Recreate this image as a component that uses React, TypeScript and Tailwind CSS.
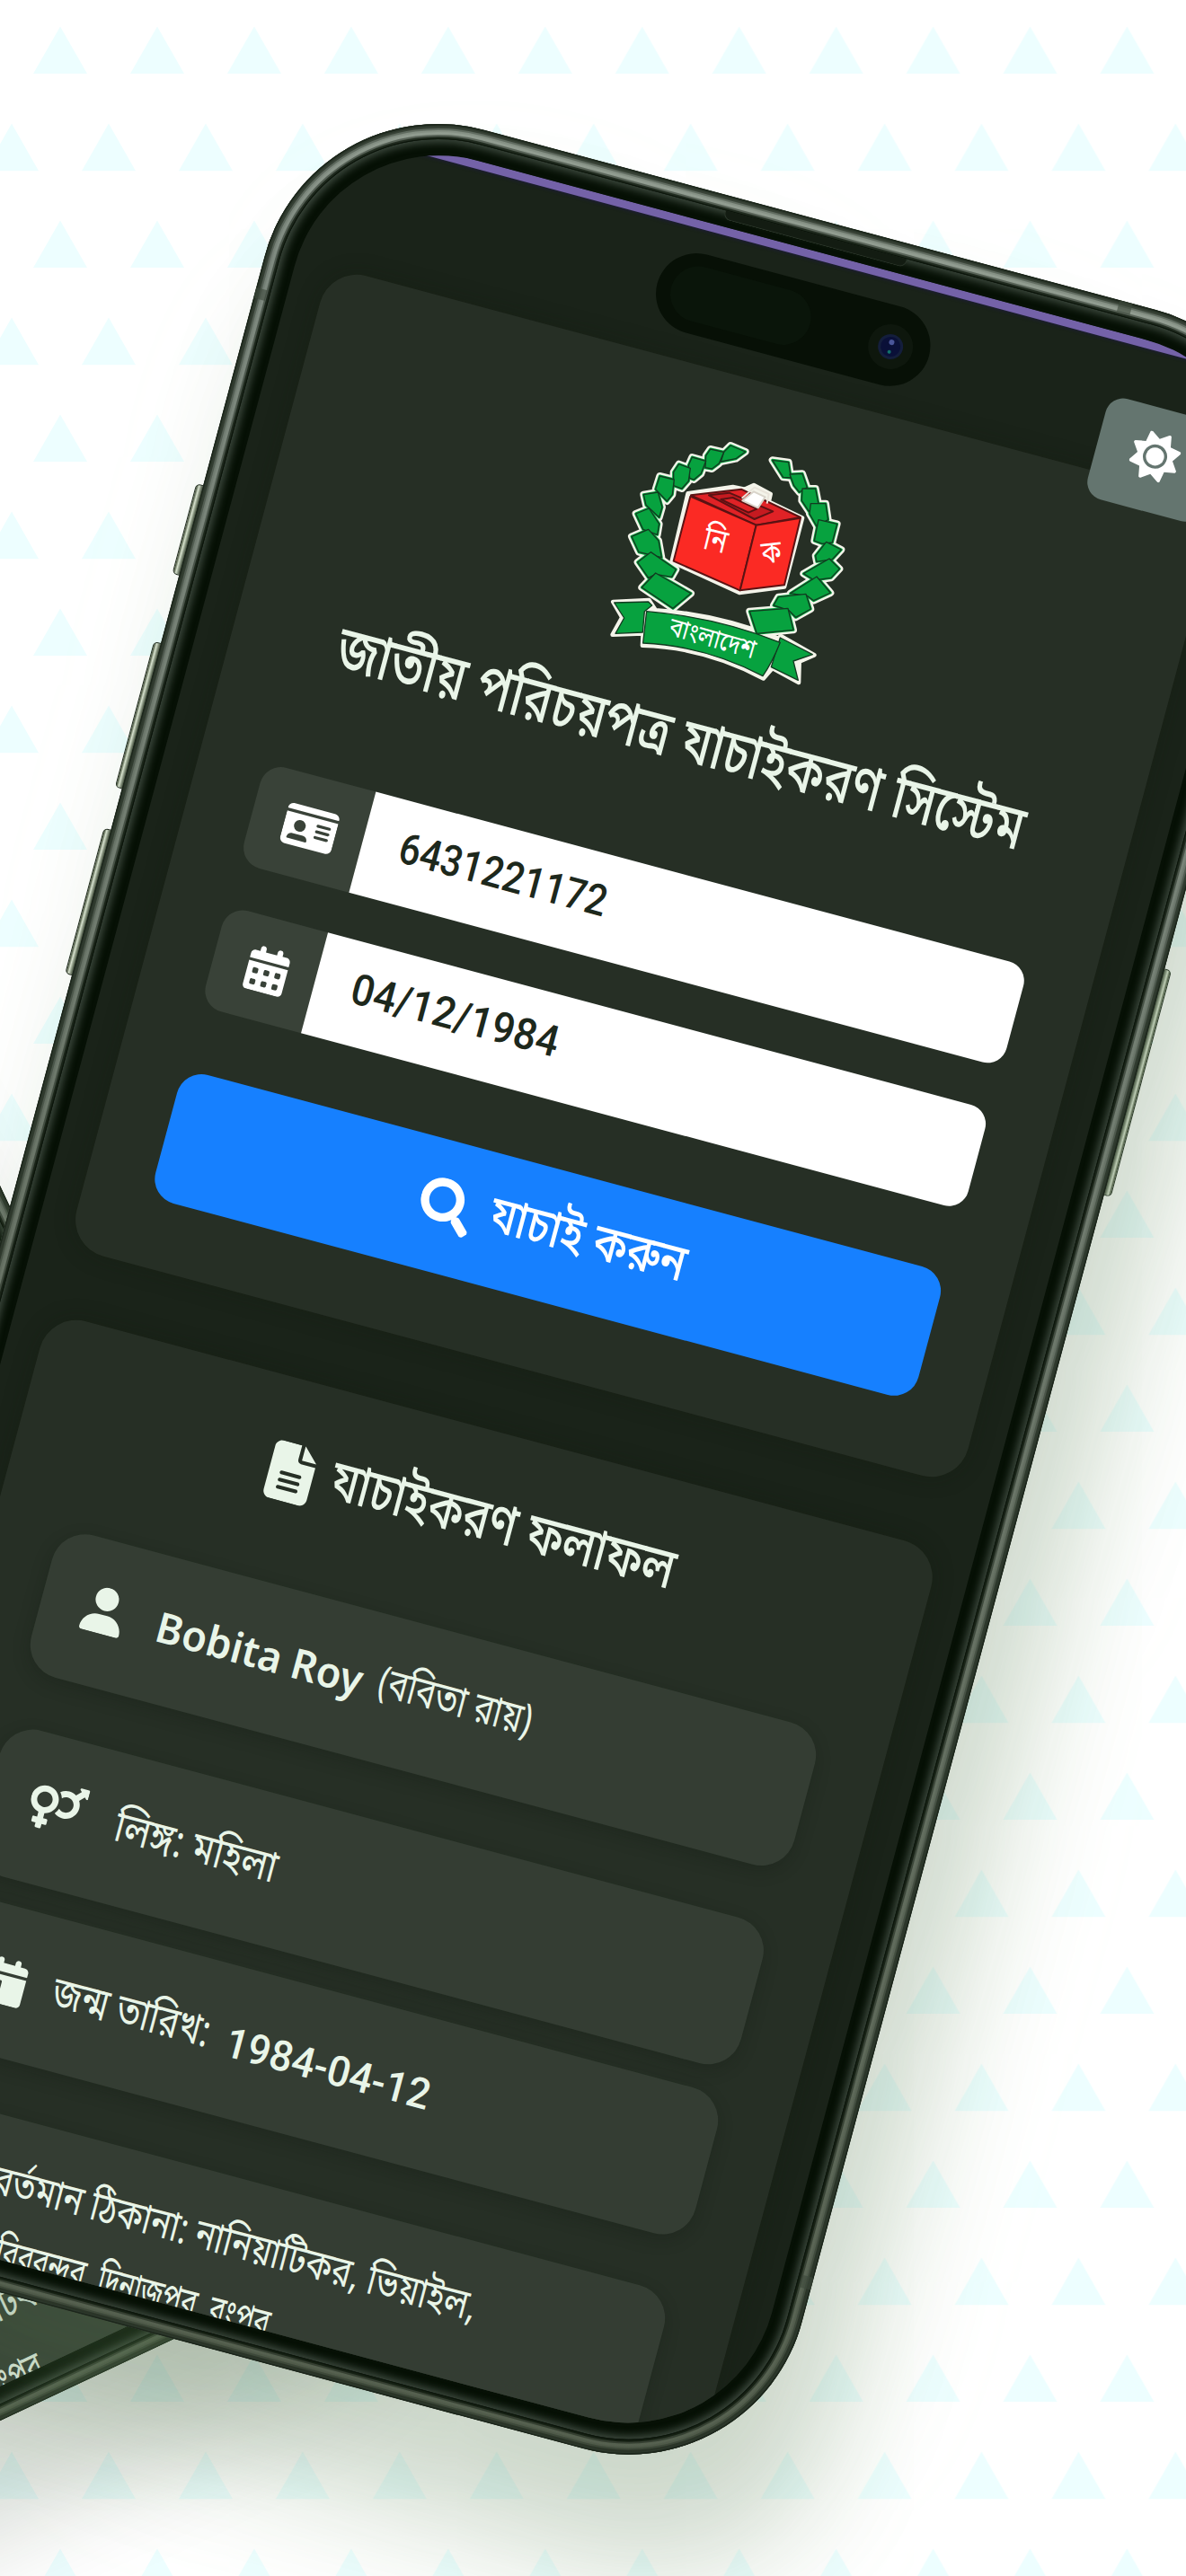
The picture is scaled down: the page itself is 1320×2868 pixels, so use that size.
import { useLayoutEffect, useRef, useState } from "react";
import type { ReactNode } from "react";
import {
  FaCalendarDay,
  FaCalendarDays,
  FaFileLines,
  FaIdCard,
  FaLocationDot,
  FaSun,
  FaUser,
} from "react-icons/fa6";
import { FaSearch, FaVenusMars } from "react-icons/fa";

/** One line of text, stretched horizontally so that it fills the given width. */
function Line({ width, className = "", children }: { width: number; className?: string; children: ReactNode }) {
  const ref = useRef<HTMLSpanElement>(null);
  const [scale, setScale] = useState(1);
  useLayoutEffect(() => {
    const natural = ref.current?.offsetWidth ?? 0;
    if (natural > 0) setScale(width / natural);
  }, [width]);
  return (
    <span className="inline-block shrink-0" style={{ width }}>
      <span
        ref={ref}
        className={`inline-block origin-left whitespace-nowrap ${className}`}
        style={{ transform: `scaleX(${scale})` }}
      >
        {children}
      </span>
    </span>
  );
}

function Triangles() {
  return (
    <svg className="absolute inset-0 h-full w-full" aria-hidden="true">
      <defs>
        <pattern id="tri" width="107.95" height="216" patternUnits="userSpaceOnUse">
          <path d="M67 29.5L97 82H37ZM13 137.5L43 190.3H-17ZM120.95 137.5L150.95 190.3H90.95Z" fill="#edfeff" />
        </pattern>
      </defs>
      <rect width="100%" height="100%" fill="url(#tri)" />
    </svg>
  );
}

const leftLeaves = [
  "M480 160L490 128L512 106L562 127L530 150Z",
  "M428 180L430 140L445 118L490 128L474 166L450 184Z",
  "M376 215L372 172L384 145L430 158L414 200L390 220Z",
  "M322 240L322 195L340 168L378 182L372 225L350 250Z",
  "M262 252L276 208L324 220L318 270L300 292Z",
  "M230 305L222 270L270 262L284 312L274 346Z",
  "M196 334L240 316L274 368L268 404L220 386Z",
  "M182 410L238 386L272 424L282 480L206 462Z",
  "M202 496L246 462L330 520L316 545L262 536L238 548Z",
  "M320 650L216 580L262 532L380 600Z",
];
const rightLeaves = [
  "M652 155L706 162L714 214L688 212Z",
  "M710 202L752 200L768 246L742 262L724 240Z",
  "M752 250L796 250L806 302L774 326L750 290Z",
  "M780 300L830 300L838 354L800 376L776 334Z",
  "M806 354L868 368L852 430L818 434L792 424Z",
  "M832 428L882 454L852 486L800 494L796 474Z",
  "M842 484L876 518L848 548L792 556L756 534Z",
  "M800 544L846 598L790 624L768 608L712 600Z",
  "M764 602L780 652L730 680L706 656L656 640L672 612Z",
  "M576 660L704 650L722 722L600 734Z",
];

function Emblem() {
  return (
    <svg viewBox="0 0 1020 960" className="h-[320px] w-[340px] -rotate-15 overflow-visible" strokeLinejoin="round">
      <g fill="#f4f4ea" stroke="#f4f4ea" strokeWidth="24">
        {leftLeaves.concat(rightLeaves).map((d) => (
          <path key={d} d={d} />
        ))}
      </g>
      <g fill="#f4f4ea" stroke="#f4f4ea" strokeWidth="14">
        <path d="M120 628L240 622L262 656Q470 670 672 750L680 742L792 806L742 828L740 898L652 850L622 884Q430 780 218 774L220 734L118 738L150 680Z" />
        <path d="M370 266L520 244L560 252L590 238L646 268L640 294L752 348L692 578L542 598L316 494Z" />
      </g>
      <g fill="#07a23f" stroke="#07a23f" strokeWidth="9">
        {leftLeaves.concat(rightLeaves).map((d) => (
          <path key={d} d={d} />
        ))}
      </g>
      <g fill="#07a23f" stroke="#123a20" strokeWidth="4">
        {leftLeaves.concat(rightLeaves).map((d) => (
          <path key={d} d={d} />
        ))}
        <path d="M124 631L238 628L250 640L225 660L219 730L128 734L157 682Z" />
        <path d="M678 748L786 804L722 826L738 890L648 846Z" />
        <path d="M232 660Q470 680 678 764Q652 830 620 876Q430 776 220 766Z" />
      </g>
      <g strokeWidth="6" stroke="#5c1213">
        <path d="M380 272L548 252L746 346L598 372Z" fill="#e02226" />
        <path d="M378 276L598 372L544 590L322 492Z" fill="#fb2a24" />
        <path d="M598 372L746 348L692 572L544 590Z" fill="#fb2a24" />
        <path d="M440 272L508 264L654 326L592 352Z" fill="#c51a20" />
        <path d="M480 286L520 280L600 318L572 330Z" fill="#e02226" />
        <path d="M550 282L592 246L640 268L634 300" fill="none" stroke="#e9e4da" />
        <path d="M552 290L590 260L628 278L604 314Z" fill="#fff" stroke="#d9d4ca" />
      </g>
      <g fill="#fff" className="font-['Noto_Sans_Bengali','Noto_Sans',sans-serif]" textAnchor="middle">
        <text transform="translate(454 458) rotate(14)" fontSize="112" textLength="78" lengthAdjust="spacingAndGlyphs">
          নি
        </text>
        <text transform="translate(652 498) rotate(-6)" fontSize="106" textLength="66" lengthAdjust="spacingAndGlyphs">
          ক
        </text>
        <text transform="translate(444 778) rotate(16)" fontSize="88" textLength="296" lengthAdjust="spacingAndGlyphs">
          বাংলাদেশ
        </text>
      </g>
    </svg>
  );
}

function SideButton({ className }: { className: string }) {
  return (
    <div
      className={`absolute w-4 rounded-[5px] border border-[#1c261a] bg-linear-to-r from-[#39422f] via-[#dfe8d6] via-20% to-[#2f3929] to-55% ${className}`}
    />
  );
}

function Field({ icon, addon, value }: { icon: ReactNode; addon: string; value: string }) {
  return (
    <div className="flex h-[116px] w-full">
      <div
        className={`flex shrink-0 items-center justify-center rounded-l-[24px] bg-[#394238] pl-1.5 text-white ${addon}`}
      >
        {icon}
      </div>
      <div className="flex flex-1 items-center rounded-r-[22px] bg-white pb-2.5 pl-[42px] text-[#1d281c]">
        <Line width={238} className="font-['Roboto',sans-serif] text-[48px] font-medium leading-none">
          {value}
        </Line>
      </div>
    </div>
  );
}

const bengali = "font-['Noto_Sans_Bengali','Noto_Serif_Bengali','Noto_Sans',sans-serif]";

function Row({ icon, className, children }: { icon?: ReactNode; className: string; children: ReactNode }) {
  return (
    <div
      className={`flex w-full shrink-0 items-center rounded-[38px] bg-[#343d33] text-[#e9f5e8] shadow-[0_6px_18px_rgba(15,25,14,0.25)] ${className}`}
    >
      {icon && <div className="flex w-[132px] shrink-0 justify-center pl-2.5 text-[52px]">{icon}</div>}
      {children}
    </div>
  );
}

function Screen() {
  return (
    <div className="flex h-full w-full flex-col items-center overflow-hidden rounded-[166px] bg-[#1a2319]">
      <div className="h-[9px] w-full shrink-0 bg-[#7462a8] shadow-[0_1px_4px_#1c1b38]" />
      <div className="mt-[147px] flex h-[1130px] w-[1027px] shrink-0 flex-col items-center rounded-[42px] bg-[#262f25] px-[74px] shadow-[0_0_24px_rgba(15,28,14,0.3)]">
        <div className="mt-[38px]">
          <Emblem />
        </div>
        <h1 className="mt-[9px] flex h-[92px] items-center text-[#e9f5e8]">
          <Line width={789} className={`text-[70px] font-medium leading-none ${bengali}`}>
            জাতীয় পরিচয়পত্র যাচাইকরণ সিস্টেম
          </Line>
        </h1>
        <div className="mt-[93px] flex w-full flex-col gap-[49px]">
          <Field icon={<FaIdCard className="text-[59px]" />} addon="w-[127px]" value="6431221172" />
          <Field icon={<FaCalendarDays className="text-[51px]" />} addon="w-[116px]" value="04/12/1984" />
        </div>
        <div className="mt-[72px] flex h-[148px] w-full shrink-0 items-center justify-center gap-[20px] rounded-[28px] bg-[#1680ff] pb-1 pl-2 text-white">
          <FaSearch className="text-[60px]" />
          <Line width={224} className={`text-[58px] font-medium leading-none ${bengali}`}>
            যাচাই করুন
          </Line>
        </div>
      </div>
      <div className="mt-[75px] flex h-[1400px] w-[1027px] shrink-0 flex-col items-center rounded-[42px] bg-[#262f25] px-[74px] shadow-[0_0_24px_rgba(15,28,14,0.3)]">
        <h2 className="mr-[8px] mt-[72px] flex h-[64px] items-center gap-[13px] text-[#e9f5e8]">
          <FaFileLines className="text-[66px]" />
          <Line width={394} className={`text-[64px] font-medium leading-none ${bengali}`}>
            যাচাইকরণ ফলাফল
          </Line>
        </h2>
        <Row icon={<FaUser />} className="mt-[92px] h-[164px] pb-2">
          <Line width={237} className="font-['Noto_Sans',sans-serif] text-[47px] font-semibold leading-none">
            Bobita Roy
          </Line>
          <Line width={175} className={`ml-[18px] text-[48px] leading-none ${bengali}`}>
            (ববিতা রায়)
          </Line>
        </Row>
        <Row
          icon={<FaVenusMars className="-mr-3 -mt-3 shrink-0 text-[62px]" />}
          className="mt-[61px] h-[168px]"
        >
          <Line width={186} className={`ml-[13px] text-[49px] leading-none ${bengali}`}>
            লিঙ্গ: মহিলা
          </Line>
        </Row>
        <Row icon={<FaCalendarDay />} className="mt-[28px] h-[168px]">
          <Line width={180} className={`-ml-[6px] text-[49px] leading-none ${bengali}`}>
            জন্ম তারিখ:
          </Line>
          <Line width={235} className="ml-3.5 font-['Roboto',sans-serif] text-[47px] font-medium leading-none">
            1984-04-12
          </Line>
        </Row>
        <Row icon={<FaLocationDot />} className="mt-[60px] h-[240px]">
          <div className="-ml-[16px] -mt-[18px] flex flex-col gap-[25px] text-[47px] leading-none">
            <Line width={556} className={bengali}>
              বর্তমান ঠিকানা: নানিয়াটিকর, ভিয়াইল,
            </Line>
            <Line width={338} className={bengali}>
              চিরিরবন্দর, দিনাজপুর, রংপুর
            </Line>
          </div>
        </Row>
      </div>
    </div>
  );
}

/** The lower end of the same screen, of which only a corner shows behind the front phone. */
function BackScreen() {
  return (
    <div className="flex h-full w-full flex-col items-center overflow-hidden rounded-[166px] bg-[#1a2319]">
      <div className="mt-[1360px] flex h-[1400px] w-[1027px] shrink-0 flex-col rounded-[42px] bg-[#262f25] px-[74px]">
        <Row className="mt-[878px] h-[240px]">
          <div className="-mt-2 flex flex-col gap-[25px] text-[47px] leading-none">
            <Line width={556} className={`ml-[155px] ${bengali}`}>
              বর্তমান ঠিকানা: নানিয়াটিকর, ভিয়াইল,
            </Line>
            <Line width={338} className={`ml-[171px] ${bengali}`}>
              চিরিরবন্দর, দিনাজপুর, রংপুর
            </Line>
          </div>
        </Row>
      </div>
    </div>
  );
}

function Phone({ className, shadow, children }: { className: string; shadow: string; children: ReactNode }) {
  return (
    <div className={`absolute h-[2465px] w-[1173px] origin-top-left ${className}`}>
      <SideButton className="-left-2 top-[463px] h-[104px]" />
      <SideButton className="-left-2 top-[645px] h-[168px]" />
      <SideButton className="-left-2 top-[860px] h-[168px]" />
      <SideButton className="-right-2 top-[706px] h-[261px] -scale-x-100" />
      <div
        className={`relative h-full w-full rounded-[200px] bg-linear-to-b from-[#929d91] via-[#7f8a80] via-8% to-[#55604f] p-[35px] ${shadow}`}
      >
        <div className="pointer-events-none absolute inset-0 rounded-[200px] shadow-[inset_0_0_0_1.5px_#1c261b,inset_0_0_0_3px_#2c372b,inset_0_0_0_5px_rgba(30,40,28,0.6),inset_0_0_0_7px_rgba(30,40,28,0.35),inset_0_0_0_9px_rgba(30,40,28,0.1)]" />
        <div className="pointer-events-none absolute inset-[12px] rounded-[188px] bg-[#06100566]" />
        <div className="pointer-events-none absolute inset-[14px] rounded-[186px] bg-[#061005aa]" />
        <div className="pointer-events-none absolute inset-[16px] rounded-[184px] border-[1.5px] border-[#0c150b] bg-[#061005] shadow-[inset_0_0_9px_4px_#3c483d]" />
        <div className="relative h-full w-full">{children}</div>
        <div className="absolute left-0 top-[235px] h-3 w-[13px] bg-[#3c473b99]" />
        <div className="absolute left-[932px] top-0 h-[13px] w-[15px] bg-[#3c473b99]" />
        <div className="absolute bottom-[236px] right-0 h-3.5 w-[13px] bg-[#3c473b99]" />
        <div className="absolute left-[482px] top-[17px] h-2.5 w-[210px] rounded-b-lg border border-t-0 border-[#2c372b] bg-[#131c12]" />
      </div>
    </div>
  );
}

export default function App() {
  return (
    <main className="relative h-[2868px] w-[1320px] overflow-hidden bg-white">
      <Triangles />
      <Phone
        className="left-[-1581px] top-[714.7px] rotate-[-25.2deg]"
        shadow="shadow-[-50px_115px_110px_rgba(20,45,14,0.16)]"
      >
        <BackScreen />
      </Phone>
      <Phone
        className="left-[346.3px] top-[92.8px] rotate-15"
        shadow="shadow-[60px_110px_130px_rgba(20,45,20,0.19),60px_110px_170px_rgba(200,255,180,0.16)]"
      >
        <Screen />
        <div className="absolute right-[57px] top-[69px] flex h-[116px] w-[132px] items-center justify-center rounded-[20px] bg-[#64756f] pb-2 text-[54px] text-white">
          <FaSun />
        </div>
        <div className="absolute left-[395px] top-[35px] h-[90px] w-[313px] rounded-full bg-[#071006]">
          <div className="absolute left-4 top-3.5 h-[62px] w-[160px] rounded-[31px] bg-[#0a150a]" />
          <div className="absolute right-[19px] top-[21px] flex size-[50px] items-center justify-center rounded-full bg-[#0e170d]">
            <div className="flex size-[28px] flex-col items-center justify-center gap-1.5 rounded-full border-3 border-[#141e3c] bg-[#0a1038]">
              <div className="size-1.5 rounded-full bg-[#4a5699]" />
              <div className="size-1 rounded-full bg-[#11706b]" />
            </div>
          </div>
        </div>
      </Phone>
    </main>
  );
}
